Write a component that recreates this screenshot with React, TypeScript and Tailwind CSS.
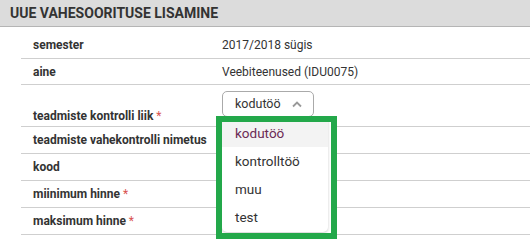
import React from "react";

const rows = [
  { label: "teadmiste vahekontrolli nimetus", required: false },
  { label: "kood", required: false },
  { label: "miinimum hinne", required: true },
  { label: "maksimum hinne", required: true },
  { label: "kaal", required: false },
];

const options = ["kodutöö", "kontrolltöö", "muu", "test"];

const Star = () => <span className="text-[#d9534f] font-normal"> *</span>;

const App = () => {
  return (
    <div className="w-[530px] h-[242px] overflow-hidden bg-white text-[#333] font-['Roboto',sans-serif] text-[12px]">
      <div className="h-[27px] bg-[#dcdcdc] border-b border-[#b5b5b5] flex items-center pl-[10px]">
        <span className="font-bold text-[14px] text-[#333]">UUE VAHESOORITUSE LISAMINE</span>
      </div>

      <div className="ml-[21px] pt-[5px]">
        <div className="flex h-[27px] border-b border-[#cfcfcf] items-center">
          <div className="w-[201px] pl-3 font-bold">semester</div>
          <div>2017/2018 sügis</div>
        </div>
        <div className="flex h-[26px] border-b border-[#cfcfcf] items-center">
          <div className="w-[201px] pl-3 font-bold">aine</div>
          <div>Veebiteenused (IDU0075)</div>
        </div>
        <div className="flex h-[42px] border-b border-[#cfcfcf] items-start">
          <div className="w-[201px] pl-3 pt-[22px] font-bold">
            teadmiste kontrolli liik
            <Star />
          </div>
          <div className="relative mt-[6px]">
            <div className="w-[92px] h-[26px] border border-[#aaa] rounded-[5px] flex items-center justify-between pl-3 pr-[11px] text-[12.5px]">
              <span>kodutöö</span>
              <svg width="10" height="7" viewBox="0 0 10 7" fill="none">
                <polyline points="1,5.5 5,1.5 9,5.5" stroke="#999" strokeWidth="1.8" />
              </svg>
            </div>
            <div className="absolute z-10 left-[-6px] top-[25px] w-[121px] h-[123px] border-[6px] border-[#23a84a] bg-white overflow-hidden">
              <div className="-mt-[3px] w-[106px] bg-white rounded-b-[5px] shadow-[0_1px_3px_rgba(0,0,0,0.2)] pb-[1px] text-[13.5px]">
                {options.map((o, i) => (
                  <div
                    key={o}
                    className={
                      i === 0
                        ? "h-[28px] flex items-center pl-[13px] bg-[#f3f3f3] text-[#6b2a55]"
                        : "h-[28px] flex items-center pl-[13px] text-[#333]"
                    }
                  >
                    {o}
                  </div>
                ))}
              </div>
            </div>
          </div>
        </div>
        {rows.map((r) => (
          <div key={r.label} className="flex h-[27px] border-b border-[#cfcfcf] items-center">
            <div className="w-[201px] pl-3 font-bold">
              {r.label}
              {r.required && <Star />}
            </div>
            <div></div>
          </div>
        ))}
      </div>
    </div>
  );
};

export default App;
